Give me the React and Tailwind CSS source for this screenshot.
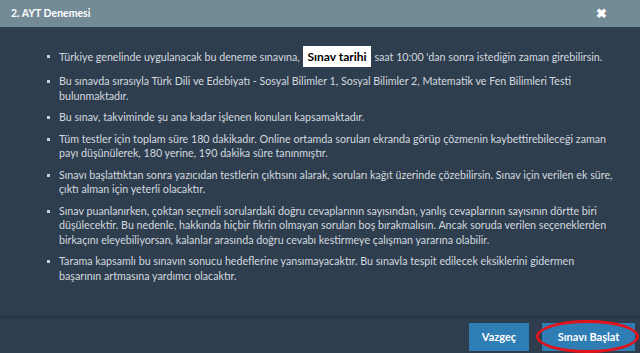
import React from "react";

const items = [
  "Bu sınavda sırasıyla Türk Dili ve Edebiyatı - Sosyal Bilimler 1, Sosyal Bilimler 2, Matematik ve Fen Bilimleri Testi bulunmaktadır.",
  "Bu sınav, takviminde şu ana kadar işlenen konuları kapsamaktadır.",
  "Tüm testler için toplam süre 180 dakikadır. Online ortamda soruları ekranda görüp çözmenin kaybettirebileceği zaman payı düşünülerek, 180 yerine, 190 dakika süre tanınmıştır.",
  "Sınavı başlattıktan sonra yazıcıdan testlerin çıktısını alarak, soruları kağıt üzerinde çözebilirsin. Sınav için verilen ek süre, çıktı alman için yeterli olacaktır.",
  "Sınav puanlanırken, çoktan seçmeli sorulardaki doğru cevaplarının sayısından, yanlış cevaplarının sayısının dörtte biri düşülecektir. Bu nedenle, hakkında hiçbir fikrin olmayan soruları boş bırakmalısın. Ancak soruda verilen seçeneklerden birkaçını eleyebiliyorsan, kalanlar arasında doğru cevabı kestirmeye çalışman yararına olabilir.",
  "Tarama kapsamlı bu sınavın sonucu hedeflerine yansımayacaktır. Bu sınavla tespit edilecek eksiklerini gidermen başarının artmasına yardımcı olacaktır.",
];

function Bullet({ children, tall }) {
  return (
    <li className={`flex ${tall ? "leading-[21px]" : "leading-[14.5px]"}`}>
      <span className={`w-[12px] shrink-0 flex justify-start ${tall ? "pt-[9px]" : "pt-[6px]"}`}>
        <span className="block w-[3px] h-[3px] bg-[#c9d0d7]" />
      </span>
      <span className="flex-1">{children}</span>
    </li>
  );
}

export default function App() {
  return (
    <div
      className="w-[640px] h-[353px] flex flex-col bg-[#2f3e4f] overflow-hidden"
      style={{ fontFamily: "Lato, 'Open Sans', sans-serif" }}
    >
      {/* header */}
      <div className="h-[27px] shrink-0 bg-[#738a97] flex items-center justify-between pl-[11px] pr-[33px]">
        <span className="text-white text-[10.5px] font-bold">2. AYT Denemesi</span>
        <span className="text-white text-[13px] font-bold leading-none">✖</span>
      </div>

      {/* body */}
      <div className="flex-1 pt-[19px] pl-[47px] pr-[26px]">
        <ul className="flex flex-col gap-[7px] text-[10.7px] text-[#d3d9df]">
          <Bullet tall>
            Türkiye genelinde uygulanacak bu deneme sınavına,{" "}
            <span className="inline-block bg-white text-black font-bold text-[12px] px-[4px] h-[21px] leading-[21px] ml-[1px] mr-[1px]">
              Sınav tarihi
            </span>{" "}
            saat 10:00 'dan sonra istediğin zaman girebilirsin.
          </Bullet>
          {items.map((t, i) => (
            <Bullet key={i}>{t}</Bullet>
          ))}
        </ul>
      </div>

      {/* footer */}
      <div className="h-[36px] shrink-0 border-t border-[#243241] shadow-[0_-1px_1px_rgba(0,0,0,0.15)] flex justify-end items-start pt-[5px] pr-[5px] gap-[13px]">
        <button className="w-[60px] h-[28px] bg-[#2e7db5] text-white text-[11px] font-bold">
          Vazgeç
        </button>
        <div className="relative">
          <button className="w-[93px] h-[28px] bg-[#2e7db5] text-white text-[11px] font-bold">
            Sınavı Başlat
          </button>
          <span className="absolute -left-[6px] -right-[4px] -top-[3px] -bottom-[2px] border-[3px] border-[#e3131b] rounded-[50%]" />
        </div>
      </div>
    </div>
  );
}
